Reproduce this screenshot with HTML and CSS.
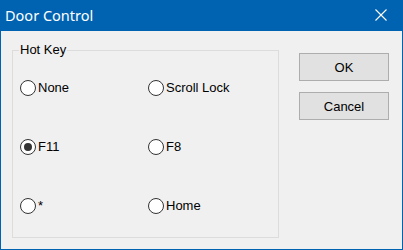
FILE: index.html
```html
<!DOCTYPE html>
<html>
<head>
<meta charset="utf-8">
<link rel="stylesheet" href="styles.css">
</head>
<body>
<div class="window">
  <div class="titlebar">
    <span class="title">Door Control</span>
    <span class="close">
      <svg width="12" height="12" viewBox="0 0 12 12"><path d="M0.5 0.5 L11.5 11.5 M11.5 0.5 L0.5 11.5" stroke="#fff" stroke-width="1.1" fill="none"/></svg>
    </span>
  </div>
  <div class="content">
    <div class="group">
      <span class="legend">Hot Key</span>
      <div class="radios">
        <label class="radio"><span class="circle"></span><span>None</span></label>
        <label class="radio"><span class="circle"></span><span>Scroll Lock</span></label>
        <label class="radio"><span class="circle checked"></span><span>F11</span></label>
        <label class="radio"><span class="circle"></span><span>F8</span></label>
        <label class="radio"><span class="circle"></span><span>*</span></label>
        <label class="radio"><span class="circle"></span><span>Home</span></label>
      </div>
    </div>
    <div class="buttons">
      <div class="btn">OK</div>
      <div class="btn">Cancel</div>
    </div>
  </div>
</div>
</body>
</html>
```
FILE: styles.css
```css
html, body {
  margin: 0;
  padding: 0;
  background: #f0f0f0;
}
.window {
  width: 403px;
  height: 250px;
  box-sizing: border-box;
  background: #0063b1;
  display: flex;
  flex-direction: column;
}
.titlebar {
  height: 31px;
  flex: none;
  display: flex;
  align-items: center;
  justify-content: space-between;
  padding: 0 16px 0 5px;
  color: #fff;
  font-family: "Noto Sans", "Open Sans", sans-serif;
  font-size: 14.5px;
}
.title {
  margin-top: -1px;
}
.close {
  display: flex;
  margin-top: -1px;
}
.content {
  flex: 1;
  margin: 0 1px 1px 1px;
  background: #f0f0f0;
  display: flex;
  padding: 19px 13px 0 11px;
  font-family: "Liberation Sans", Arial, sans-serif;
  font-size: 13px;
  color: #000;
}
.group {
  width: 267px;
  height: 188px;
  box-sizing: border-box;
  border: 1px solid #dcdcdc;
  flex: none;
}
.legend {
  display: block;
  width: fit-content;
  margin: -9px 0 0 6px;
  padding: 0 1px;
  line-height: 16px;
  background: #f0f0f0;
}
.radios {
  display: grid;
  grid-template-columns: 128px 1fr;
  row-gap: 43px;
  margin: 22px 0 0 7px;
}
.radio {
  display: flex;
  align-items: center;
  gap: 2px;
  height: 16px;
  line-height: 16px;
}
.circle {
  width: 16px;
  height: 16px;
  box-sizing: border-box;
  border: 1px solid #333;
  border-radius: 50%;
  background: #fff;
  display: flex;
  align-items: center;
  justify-content: center;
  flex: none;
}
.circle.checked::after {
  content: "";
  width: 8px;
  height: 8px;
  border-radius: 50%;
  background: #333;
}
.buttons {
  display: flex;
  flex-direction: column;
  gap: 11px;
  margin: 3px 0 0 20px;
}
.btn {
  width: 90px;
  height: 28px;
  box-sizing: border-box;
  border: 1px solid #adadad;
  background: #e1e1e1;
  display: flex;
  align-items: center;
  justify-content: center;
}
```
